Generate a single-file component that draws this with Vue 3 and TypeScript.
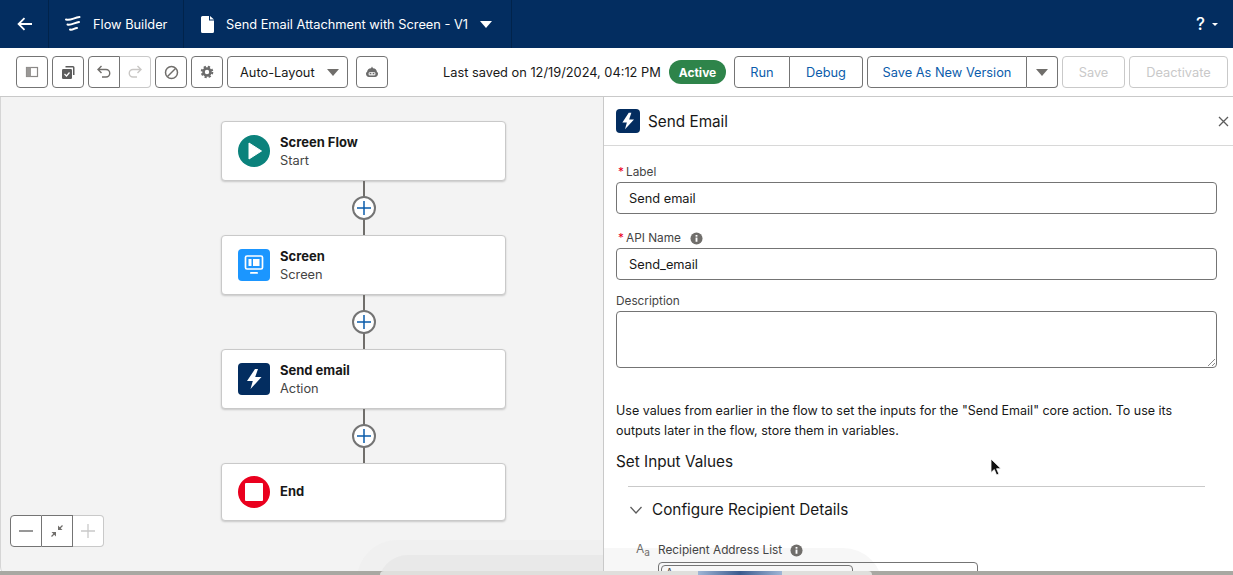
<script setup lang="ts">
interface FlowNode { title: string; sub?: string; kind: string }
const nodes: FlowNode[] = [
  { title: 'Screen Flow', sub: 'Start', kind: 'start' },
  { title: 'Screen', sub: 'Screen', kind: 'screen' },
  { title: 'Send email', sub: 'Action', kind: 'action' },
  { title: 'End', kind: 'end' },
]
</script>

<template>
  <div class="page">
    <header class="topbar">
      <div class="seg back">
        <svg width="20" height="20" viewBox="0 0 20 20"><path d="M17 10H4M9.500 4.200 3.600 10l5.900 5.800" fill="none" stroke="#fff" stroke-width="1.800"/></svg>
      </div>
      <div class="seg brand">
        <svg width="18" height="20" viewBox="0 0 18 20"><path d="M2 5.500C6.500 7 10 3.500 15.500 3M3.500 10.500C7 11.500 11 8.500 15 8M6 15.500c2.500 1 4.500-1.500 7-1.500" fill="none" stroke="#fff" stroke-width="2" stroke-linecap="round"/></svg>
        <span>Flow Builder</span>
      </div>
      <div class="seg doc">
        <svg width="13" height="17" viewBox="0 0 13 17"><path d="M1.500 0H8v4.500h5V15.500a1.500 1.500 0 0 1-1.500 1.500h-10A1.500 1.500 0 0 1 0 15.500v-14A1.500 1.500 0 0 1 1.500 0ZM9 0l4 3.500H9Z" fill="#fff"/></svg>
        <span>Send Email Attachment with Screen - V1</span>
        <i class="caret white"></i>
      </div>
      <div class="help"><span>?</span><i class="caret tiny"></i></div>
    </header>

    <div class="toolbar">
      <button class="tbtn">
        <svg width="14" height="14" viewBox="0 0 14 14"><rect x="1.500" y="2.500" width="11" height="9" fill="none" stroke="#8a8886" stroke-width="1.200"/><rect x="1.500" y="2.500" width="4.500" height="9" fill="#9a9896"/></svg>
      </button>
      <button class="tbtn">
        <svg width="14" height="15" viewBox="0 0 14 15"><path d="M4.500 1H12a1.500 1.500 0 0 1 1.500 1.500V10H12V2.500H4.500Z" fill="#5c5c5c"/><rect x="1" y="4" width="10" height="10" rx="1.200" fill="#5c5c5c"/><path d="m3.500 9 2 2 3-3.500" fill="none" stroke="#fff" stroke-width="1.200"/></svg>
      </button>
      <div class="group">
        <button class="tbtn in">
          <svg width="16" height="16" viewBox="0 0 16 16"><path d="M2.500 5.500H10a3.700 3.700 0 0 1 0 7.500H6M5.500 2 2 5.500 5.500 9" fill="none" stroke="#706e6b" stroke-width="1.400"/></svg>
        </button>
        <button class="tbtn in off">
          <svg width="16" height="16" viewBox="0 0 16 16"><path d="M13.500 5.500H6a3.700 3.700 0 0 0 0 7.500h4M10.500 2 14 5.500 10.500 9" fill="none" stroke="#c9c7c5" stroke-width="1.400"/></svg>
        </button>
      </div>
      <button class="tbtn">
        <svg width="15" height="15" viewBox="0 0 15 15"><circle cx="7.500" cy="7.500" r="6" fill="none" stroke="#706e6b" stroke-width="1.500"/><path d="m3.500 11.500 8-8" stroke="#706e6b" stroke-width="1.500"/></svg>
      </button>
      <button class="tbtn">
        <svg width="14" height="14" viewBox="0 0 14 14"><circle cx="7" cy="7" r="3.500" fill="none" stroke="#6b6b6b" stroke-width="2.600"/><circle cx="7" cy="7" r="5.300" fill="none" stroke="#6b6b6b" stroke-width="2" stroke-dasharray="2.200 2"/></svg>
      </button>
      <button class="combo">
        <span>Auto-Layout</span><i class="caret grey"></i>
      </button>
      <button class="tbtn robot">
        <svg width="14" height="14" viewBox="0 0 14 14"><path d="M7 1.500 8 3.200a4.500 4.500 0 0 1 4 3.800c.8.300 1 1 1 1.800 0 1.800-1.200 3.200-3 3.200H4c-1.800 0-3-1.400-3-3.200 0-.8.200-1.500 1-1.800a4.500 4.500 0 0 1 4-3.800Z" fill="#6b6b6b"/><rect x="3.500" y="7" width="7" height="3.500" rx="1.500" fill="#e4e4e4"/><circle cx="5.500" cy="8.500" r=".8" fill="#6b6b6b"/><circle cx="8.500" cy="8.500" r=".8" fill="#6b6b6b"/></svg>
      </button>
      <div class="status">
        <span class="saved">Last saved on 12/19/2024, 04:12 PM</span>
        <span class="badge">Active</span>
      </div>
      <div class="group brandgroup">
        <button class="btn link run">Run</button>
        <button class="btn link debug">Debug</button>
      </div>
      <div class="group brandgroup">
        <button class="btn link savenew">Save As New Version</button>
        <button class="btn more"><i class="caret grey"></i></button>
      </div>
      <button class="btn disabled save">Save</button>
      <button class="btn disabled deact">Deactivate</button>
    </div>

    <main class="workspace">
      <section class="canvas">
        <div class="ghost"><div class="ghost-inner"></div></div>
        <div class="flow">
          <template v-for="(n, i) in nodes" :key="n.title">
            <article class="node" :class="{ last: n.kind === 'end' }">
              <span class="nicon" :class="n.kind">
                <svg v-if="n.kind === 'start'" width="32" height="32" viewBox="0 0 32 32"><path d="M11 8v16l12.500-8Z" fill="#fff" stroke="#fff" stroke-linejoin="round"/></svg>
                <svg v-else-if="n.kind === 'screen'" width="32" height="32" viewBox="0 0 32 32"><rect x="7.500" y="7" width="17" height="13" rx="1.500" fill="none" stroke="#fff" stroke-width="1.700"/><rect x="10.500" y="10" width="3" height="7" fill="#fff"/><rect x="15" y="10" width="6.500" height="7" fill="#fff"/><rect x="12" y="23" width="8" height="1.800" rx=".9" fill="#fff"/></svg>
                <svg v-else-if="n.kind === 'action'" width="32" height="32" viewBox="0 0 32 32"><path d="M17 6 9 18h5.800L12.500 26 23.500 14h-6.300L20 6Z" fill="#fff"/></svg>
                <span v-else class="stop"></span>
              </span>
              <div class="ntext">
                <div class="ntitle">{{ n.title }}</div>
                <div v-if="n.sub" class="nsub">{{ n.sub }}</div>
              </div>
            </article>
            <div v-if="i < nodes.length - 1" class="link-line">
              <span class="plus">
                <svg width="16" height="16" viewBox="0 0 16 16"><path d="M8 1v14M1 8h14" stroke="#0b5cab" stroke-width="1.500"/></svg>
              </span>
            </div>
          </template>
        </div>
        <div class="zoom">
          <button class="zbtn"><svg width="14" height="14" viewBox="0 0 14 14"><path d="M0 7h14" stroke="#747474" stroke-width="1.300"/></svg></button>
          <button class="zbtn"><svg width="14" height="14" viewBox="0 0 14 14"><path d="M1.500 12.500 5 9M9 5l3.500-3.500" stroke="#706e6b" stroke-width="1.300"/><path d="M1.500 8h4.500v4.500ZM8 1.500v4.500h4.500Z" fill="#706e6b"/></svg></button>
          <button class="zbtn dim"><svg width="14" height="14" viewBox="0 0 14 14"><path d="M7 0v14M0 7h14" stroke="#c9c9c9" stroke-width="1.300"/></svg></button>
        </div>
      </section>

      <aside class="panel">
        <div class="pghost"></div>
        <div class="phead">
          <span class="picon">
            <svg width="24" height="24" viewBox="0 0 32 32"><path d="M17 5 8.500 18h6L12 27 24 14h-6.500L20.500 5Z" fill="#fff"/></svg>
          </span>
          <h2>Send Email</h2>
          <svg class="close" width="11" height="11" viewBox="0 0 11 11"><path d="m1 1 9 9M10 1l-9 9" stroke="#5c5c5c" stroke-width="1.300"/></svg>
        </div>
        <div class="pbody">
          <div class="field f-label">
            <label><b>*</b>Label</label>
            <div class="input">Send email</div>
          </div>
          <div class="field f-api">
            <label><b>*</b>API Name
              <svg class="info" width="13" height="13" viewBox="0 0 14 14"><circle cx="7" cy="7" r="6.500" fill="#706e6b"/><rect x="6" y="6" width="2" height="4.500" fill="#fff"/><rect x="6" y="3.200" width="2" height="1.800" fill="#fff"/></svg>
            </label>
            <div class="input">Send_email</div>
          </div>
          <div class="field f-desc">
            <label>Description</label>
            <div class="input area">
              <svg class="grip" width="8" height="8" viewBox="0 0 8 8"><path d="M8 1 1 8M8 5 5 8" stroke="#8a8a8a"/></svg>
            </div>
          </div>
          <p class="help-text">Use values from earlier in the flow to set the inputs for the "Send Email" core action. To use its outputs later in the flow, store them in variables.</p>
          <h3>Set Input Values</h3>
          <div class="section">
            <div class="shead">
              <svg width="14" height="14" viewBox="0 0 14 14"><path d="m1.500 4 5.500 6 5.500-6" fill="none" stroke="#5c5c5c" stroke-width="1.300"/></svg>
              <span>Configure Recipient Details</span>
            </div>
            <div class="recipient">
              <div class="rlabel">
                <span class="aa">A<sub>a</sub></span>
                <span>Recipient Address List</span>
                <svg width="13" height="13" viewBox="0 0 14 14"><circle cx="7" cy="7" r="6.500" fill="#706e6b"/><rect x="6" y="6" width="2" height="4.500" fill="#fff"/><rect x="6" y="3.200" width="2" height="1.800" fill="#fff"/></svg>
              </div>
              <div class="rinput"><span class="pill"><span class="pill-a">A</span></span></div>
            </div>
          </div>
        </div>
        <svg class="cursor" width="12" height="18" viewBox="0 0 12 18"><path d="M1 1v13.500l3.300-3 2.300 5.500 2.300-1-2.300-5.300H11Z" fill="#111" stroke="#fff" stroke-width=".8"/></svg>
      </aside>
    </main>
    <div class="strip"><div class="strip-light"></div></div>
  </div>
</template>

<style>
html, body { margin: 0; background: #fff; overflow: hidden; }
</style>

<style scoped>
.page {
  width: 1233px;
  height: 575px;
  overflow: hidden;
  display: flex;
  flex-direction: column;
  font-family: Inter, "Liberation Sans", sans-serif;
  font-size: 12.8px;
  color: #181818;
}
button { font-family: inherit; padding: 0; margin: 0; background: #fff; }

.topbar {
  height: 48px;
  flex: none;
  background: #032d60;
  display: flex;
  align-items: stretch;
  color: #fff;
}
.seg { display: flex; align-items: center; border-right: 1px solid #01234b; box-sizing: border-box; }
.back { width: 49px; padding-left: 15px; }
.brand { width: 135px; padding-left: 15px; gap: 11px; }
.doc { width: 328px; padding-left: 17px; gap: 12px; }
.help { margin-left: auto; margin-right: 15px; display: flex; align-items: center; gap: 7px; font-size: 17px; font-weight: 500; }

.caret { display: block; width: 0; height: 0; border-style: solid; border-color: transparent; border-bottom-width: 0; }
.caret.white { border-width: 7px 6px 0; border-top-color: #fff; }
.caret.grey { border-width: 7px 6px 0; border-top-color: #706e6b; }
.caret.tiny { border-width: 3px 3px 0; border-top-color: #fff; }

.toolbar {
  height: 49px;
  flex: none;
  box-sizing: border-box;
  padding: 8px 0 8px 16px;
  display: flex;
  align-items: stretch;
  background: #fff;
  border-bottom: 1px solid #c9c9c9;
}
.tbtn {
  width: 32px;
  height: 32px;
  box-sizing: border-box;
  border: 1px solid #747474;
  border-radius: 4px;
  display: flex;
  align-items: center;
  justify-content: center;
  margin-right: 4px;
}
.tbtn.in { margin: 0; border-radius: 4px 0 0 4px; }
.tbtn.in.off { border-radius: 0 4px 4px 0; border-color: #c9c9c9; border-left: 0; width: 31px; }
.group { display: flex; margin-right: 4px; }
.combo {
  width: 121px;
  height: 32px;
  box-sizing: border-box;
  border: 1px solid #747474;
  border-radius: 4px;
  display: flex;
  align-items: center;
  justify-content: space-between;
  padding: 0 8px 0 12px;
  font-size: 12.8px;
  color: #181818;
  margin-right: 8px;
}
.robot { margin-right: 0; }
.status { display: flex; align-items: center; margin-left: 55px; }
.saved { width: 218px; white-space: nowrap; }
.badge {
  width: 57px;
  height: 24px;
  border-radius: 12px;
  background: #2e844a;
  color: #fff;
  font-weight: 700;
  font-size: 12px;
  display: flex;
  align-items: center;
  justify-content: center;
  margin: 0 8px 0 8px;
}
.btn {
  height: 32px;
  box-sizing: border-box;
  border: 1px solid #747474;
  font-size: 12.8px;
  display: flex;
  align-items: center;
  justify-content: center;
}
.link { color: #0b5cab; }
.run { width: 56px; border-radius: 4px 0 0 4px; }
.debug { width: 73px; border-left: 0; border-radius: 0 4px 4px 0; }
.brandgroup { margin-right: 4px; }
.savenew { width: 160px; border-radius: 4px 0 0 4px; }
.more { width: 31px; border-left: 0; border-radius: 0 4px 4px 0; }
.disabled { color: #c9c9c9; border-color: #c9c9c9; border-radius: 4px; }
.save { width: 63px; margin-right: 4px; }
.deact { width: 99px; }

.workspace { flex: 1; min-height: 0; display: flex; background: #fff; }
.canvas {
  position: relative;
  width: 603px;
  flex: none;
  background: #f3f3f3;
  border-left: 1px solid #d5d5d5;
  box-sizing: border-box;
  border-bottom-left-radius: 8px;
  overflow: hidden;
}
.flow {
  position: relative;
  display: flex;
  flex-direction: column;
  width: 285px;
  margin: 24px 0 0 220px;
}
.node {
  height: 60px;
  box-sizing: border-box;
  background: #fff;
  border: 1px solid #c9c9c9;
  border-radius: 4px;
  box-shadow: 0 1px 2px rgba(0, 0, 0, .18);
  display: flex;
  align-items: center;
  padding-left: 16px;
  gap: 10px;
}
.node.last { height: 58px; padding-bottom: 1px; }
.node.last .ntext { margin-top: -2px; }
.nicon { width: 32px; height: 32px; border-radius: 4px; display: flex; align-items: center; justify-content: center; flex: none; }
.nicon.start { background: #0b827c; border-radius: 50%; }
.nicon.screen { background: #1b96ff; }
.nicon.action { background: #032d60; }
.nicon.end { background: #ea001e; border-radius: 50%; margin-top: 1px; }
.stop { width: 18px; height: 18px; background: #fff; border-radius: 1px; }
.ntitle { font-weight: 700; font-size: 13px; line-height: 18px; }
.nsub { color: #444; font-size: 12.8px; line-height: 18px; padding-top: 1px; margin-bottom: -1px; }
.link-line {
  height: 54px;
  display: flex;
  align-items: center;
  justify-content: center;
  background: linear-gradient(#706e6b, #706e6b) center / 2px 100% no-repeat;
}
.plus {
  width: 24px;
  height: 24px;
  box-sizing: border-box;
  border: 2px solid #747474;
  background: #fff;
  border-radius: 50%;
  display: flex;
  align-items: center;
  justify-content: center;
}
.zoom { position: absolute; left: 9px; top: 418px; display: flex; }
.zbtn {
  width: 31px;
  height: 32px;
  box-sizing: border-box;
  border: 1px solid #747474;
  border-left-width: 0;
  display: flex;
  align-items: center;
  justify-content: center;
  background: #fff;
}
.zbtn:first-child { border-left-width: 1px; width: 32px; border-radius: 4px 0 0 4px; }
.zbtn.dim { border-color: #c9c9c9; border-radius: 0 4px 4px 0; }
.ghost {
  position: absolute;
  left: 356px;
  top: 443px;
  width: 300px;
  height: 40px;
  background: #f0f0f0;
  border-radius: 40px 0 0 0;
}
.ghost-inner {
  margin: 15px 0 0 21px;
  height: 30px;
  background: #e9e9e9;
  border-radius: 30px 0 0 0;
}

.panel {
  position: relative;
  flex: 1;
  min-width: 0;
  border-left: 1px solid #c9c9c9;
  overflow: hidden;
  background: #fff;
}
.pghost {
  position: absolute;
  left: -10px;
  top: 451px;
  width: 289px;
  height: 40px;
  background: #f7f7f7;
  border-radius: 0 60px 0 0;
}
.phead {
  position: relative;
  height: 49px;
  box-sizing: border-box;
  border-bottom: 1px solid #d8d8d8;
  display: flex;
  align-items: center;
  padding: 0 4px 0 12px;
  gap: 8px;
}
.picon { width: 24px; height: 24px; background: #032d60; border-radius: 4px; display: flex; }
h2 { margin: 0; font-size: 15.3px; font-weight: 400; flex: 1; }
.pbody { position: relative; padding: 16px 16px 0 12px; }
.field label { display: flex; align-items: center; box-sizing: border-box; padding-top: 2px; font-size: 11.8px; color: #444; height: 18px; }
.field label b { color: #ea001e; font-weight: 400; width: 6px; margin-left: 2px; margin-right: 2px; }
.info { margin-left: 9px; }
.input {
  margin-top: 2px;
  height: 32px;
  box-sizing: border-box;
  border: 1px solid #747474;
  border-radius: 4px;
  padding-left: 12px;
  display: flex;
  align-items: center;
}
.f-api { margin-top: 14px; }
.f-desc { margin-top: 11px; }
.area { height: 57px; position: relative; }
.grip { position: absolute; right: 1px; bottom: 1px; }
.help-text { margin: 33px 0 0; line-height: 20px; font-size: 12.500px; color: #181818; }
h3 { margin: 9px 0 0; font-size: 15.3px; font-weight: 400; line-height: 24px; }
.section { margin: 12px 12px 0 12px; border-top: 1px solid #c9c9c9; }
.shead { display: flex; align-items: center; gap: 10px; height: 45px; font-size: 15.3px; padding-left: 1px; }
.shead span { margin-left: -1px; }
.recipient { margin-left: 8px; }
.rlabel { display: flex; align-items: center; height: 18px; font-size: 11.8px; color: #444; gap: 8px; margin-top: 9px; }
.aa { color: #706e6b; font-size: 12px; width: 14px; }
.aa sub { font-size: 10px; }
.rinput {
  margin: 3px 0 0 22px;
  width: 320px;
  height: 32px;
  box-sizing: border-box;
  border: 1px solid #747474;
  border-radius: 4px;
  padding: 2px;
}
.pill { display: block; width: 192px; height: 20px; box-sizing: border-box; padding-left: 4px; border: 1px solid #747474; border-radius: 4px; font-size: 10px; }
.pill-a { color: #444; }
.cursor { position: absolute; left: 386px; top: 361px; }
.strip { height: 4px; flex: none; background: #a8a8a2; margin-top: -4px; position: relative; }
.strip-light {
  position: absolute;
  left: 380px;
  top: 0;
  width: 492px;
  height: 4px;
  border-radius: 4px 4px 0 0;
  background: linear-gradient(90deg, #dfdfdc 0, #dfdfdc 318px, #9fb6d6 318px, #3a5b8e 360px, #9fb6d6 402px, #dfdfdc 402px);
}
</style>
